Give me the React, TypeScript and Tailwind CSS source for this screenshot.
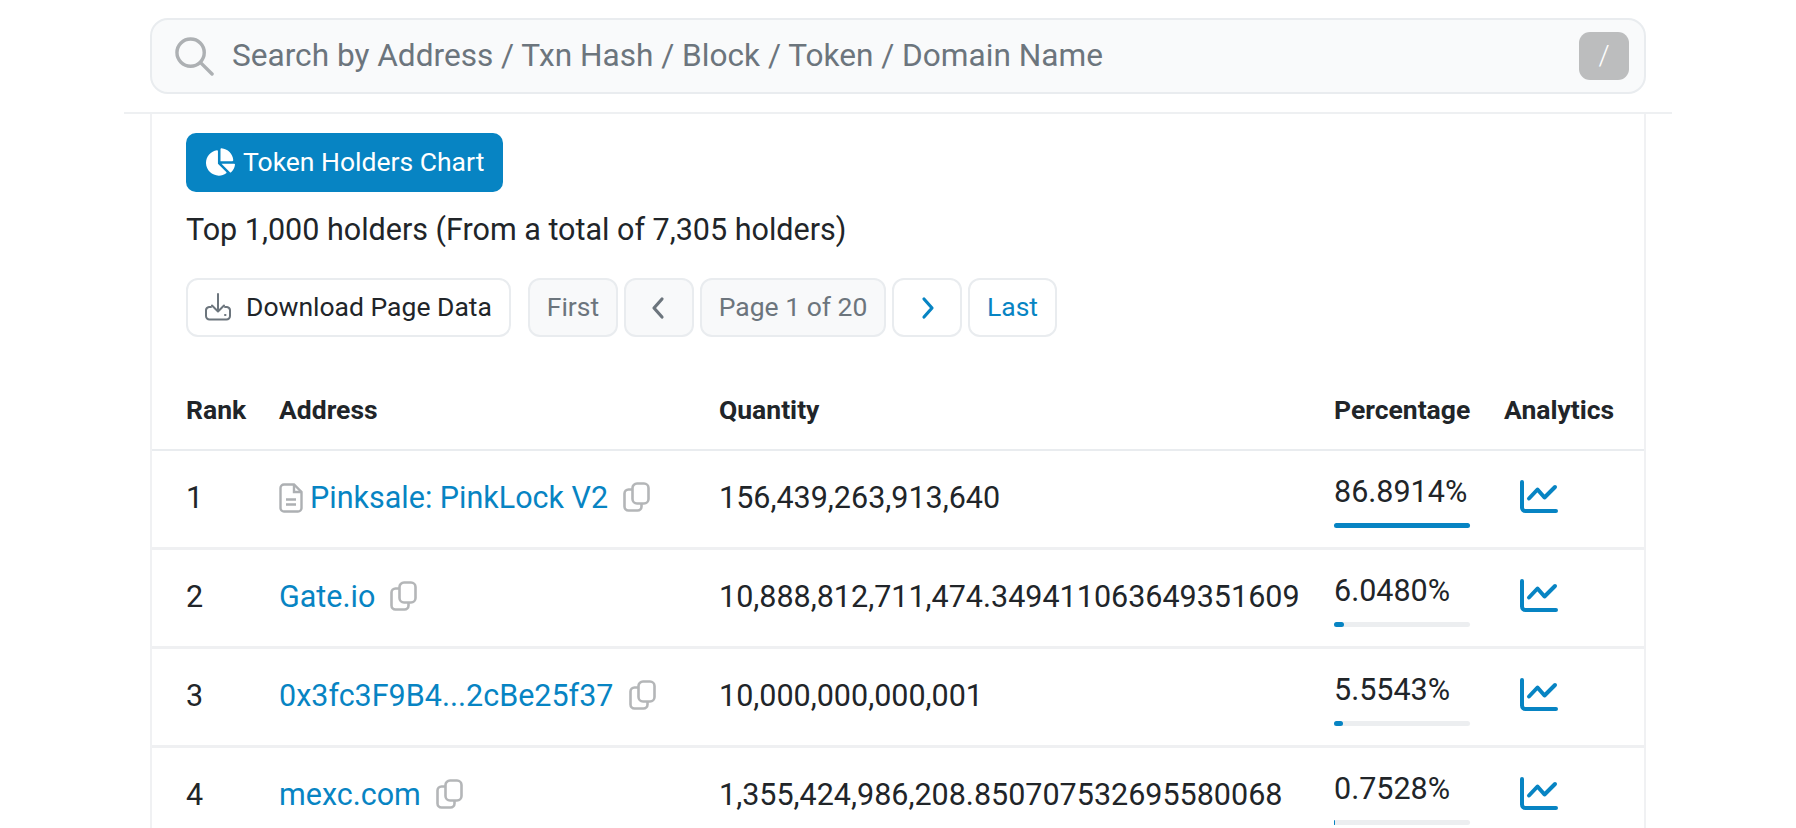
import { FaChartPie } from 'react-icons/fa'

const holders = [
  { rank: 1, name: 'Pinksale: PinkLock V2', contract: true, quantity: '156,439,263,913,640', pct: '86.8914%', bar: '100%' },
  { rank: 2, name: 'Gate.io', contract: false, quantity: '10,888,812,711,474.349411063649351609', pct: '6.0480%', bar: '7%' },
  { rank: 3, name: '0x3fc3F9B4...2cBe25f37', contract: false, quantity: '10,000,000,000,001', pct: '5.5543%', bar: '6.4%' },
  { rank: 4, name: 'mexc.com', contract: false, quantity: '1,355,424,986,208.850707532695580068', pct: '0.7528%', bar: '1%' },
]

function CopyIcon() {
  return (
    <svg viewBox="0 0 27 30" className="w-[27px] h-[30px] shrink-0 -mt-[3px]" fill="none" stroke="#b4b6b8" strokeWidth="2.6">
      <rect x="9.500" y="1.500" width="16" height="20" rx="4.500" />
      <path d="M9 7.500H5.500a4 4 0 0 0-4 4v13a4 4 0 0 0 4 4h9a4 4 0 0 0 4-4V22" />
    </svg>
  )
}

function FileIcon() {
  return (
    <svg viewBox="0 0 24 30" className="w-[24px] h-[30px] shrink-0" fill="none" stroke="#adb0b3" strokeWidth="2.4">
      <path d="M5 1.500h10l7.500 7.500v16a3.500 3.500 0 0 1-3.500 3.500H5A3.500 3.500 0 0 1 1.500 25V5A3.500 3.500 0 0 1 5 1.500Z" />
      <path d="M15 1.500V9h7.500M7 16.500h10M7 21.500h10" />
    </svg>
  )
}

function LineChartIcon() {
  return (
    <svg viewBox="0 0 38 33" className="w-[38px] h-[33px] -mt-[4px]" fill="none" stroke="#0784c3" strokeWidth="4" strokeLinecap="round" strokeLinejoin="round">
      <path d="M2 2v25.500a3.500 3.500 0 0 0 3.500 3.500H36" />
      <path d="M9 18.500l8.500-9 7 8L35 7" />
    </svg>
  )
}

function Chevron({ d, className }: { d: string; className: string }) {
  return (
    <svg viewBox="0 0 14 24" className={`w-[14px] h-[24px] ${className}`} fill="none" stroke="currentColor" strokeWidth="3.200" strokeLinecap="round" strokeLinejoin="round">
      <path d={d} />
    </svg>
  )
}

export default function App() {
  return (
    <div className="h-screen overflow-hidden bg-white text-[#212529] font-['Roboto',sans-serif] text-[30.5px]">
      <div className="px-[150px] pt-[18px] pb-[18px]">
        <div className="h-[76px] flex items-center pl-[23px] pr-[15px] bg-[#f9fafb] border-2 border-[#e9ecef] rounded-[18px]">
          <svg viewBox="0 0 40 40" className="w-[39px] h-[39px] shrink-0" fill="none" stroke="#adb0b3" strokeWidth="3.500">
            <circle cx="16" cy="16" r="14" />
            <path d="M26.500 26.500L38 38" strokeLinecap="round" />
          </svg>
          <span className="ml-[18px] text-[#6c757d] flex-1 text-[31.600px]">Search by Address / Txn Hash / Block / Token / Domain Name</span>
          <span className="w-[50px] h-[48px] bg-[#bcbdbe] rounded-[11px] flex items-center justify-center text-white text-[28px] font-light">/</span>
        </div>
      </div>
      <div className="mx-[124px] border-t-2 border-[#eef0f2]">
        <div className="mx-[26px] border-x-2 border-[#f0f1f3]">
          <div className="px-[34px] pt-[19px]">
            <div className="w-[317px] h-[59px] pb-[2px] bg-[#0784c3] rounded-[10px] flex items-center gap-[8px] pl-[20px] text-white text-[26.500px] whitespace-nowrap">
              <FaChartPie className="w-[29px] h-[28px]" />
              <span>Token Holders Chart</span>
            </div>
            <p className="mt-[19px] leading-[38px]">Top 1,000 holders (From a total of 7,305 holders)</p>
            <div className="mt-[29px] flex items-center text-[26.500px]">
              <div className="w-[325px] h-[59px] pb-[2px] flex items-center gap-[14px] pl-[16px] border-2 border-[#e9ecef] rounded-[12px] whitespace-nowrap">
                <svg viewBox="0 0 28 30" className="w-[28px] h-[30px]" fill="none" stroke="#6c757d" strokeWidth="2" strokeLinecap="round" strokeLinejoin="round">
                  <path d="M14 2v17M8 13.500l6 6 6-6" />
                  <path d="M7 15H5a3.500 3.500 0 0 0-3 3v6a3.500 3.500 0 0 0 3.500 3.500h17A3.500 3.500 0 0 0 26 24v-6a3.500 3.500 0 0 0-3-3h-2" />
                  <path d="M21 23h.5" />
                </svg>
                <span>Download Page Data</span>
              </div>
              <div className="ml-[17px] w-[90px] h-[59px] pb-[2px] flex items-center justify-center bg-[#f8f9fa] border-2 border-[#e9ecef] rounded-[12px] text-[#6c757d]">First</div>
              <div className="ml-[6px] w-[70px] h-[59px] flex items-center justify-center bg-[#f8f9fa] border-2 border-[#e9ecef] rounded-[12px] text-[#6c757d]">
                <Chevron d="M11 3L3 12l8 9" className="-ml-[2px]" />
              </div>
              <div className="ml-[6px] w-[186px] h-[59px] pb-[2px] flex items-center justify-center bg-[#f8f9fa] border-2 border-[#e9ecef] rounded-[12px] text-[#6c757d]">Page 1 of 20</div>
              <div className="ml-[6px] w-[70px] h-[59px] flex items-center justify-center border-2 border-[#e9ecef] rounded-[12px] text-[#0784c3]">
                <Chevron d="M3 3l8 9-8 9" className="ml-[1px]" />
              </div>
              <div className="ml-[6px] w-[89px] h-[59px] pb-[2px] flex items-center justify-center border-2 border-[#e9ecef] rounded-[12px] text-[#0784c3]">Last</div>
            </div>
          </div>
          <div className="mt-[51px] h-[63px] pb-[18px] px-[34px] grid grid-cols-[93px_440px_615px_170px_1fr] items-center text-[26.500px] font-bold border-b-2 border-[#e9ecef]">
            <span>Rank</span>
            <span>Address</span>
            <span>Quantity</span>
            <span>Percentage</span>
            <span>Analytics</span>
          </div>
          {holders.map((h) => (
            <div key={h.rank} className="h-[99px] pb-[2px] px-[34px] grid grid-cols-[93px_440px_615px_170px_1fr] items-center border-b-[3px] border-[#eff0f2]">
              <span>{h.rank}</span>
              <div className="flex items-center">
                {h.contract && <span className="mr-[7px]"><FileIcon /></span>}
                <span className="text-[#0784c3] mr-[15px]">{h.name}</span>
                <CopyIcon />
              </div>
              <span className="whitespace-nowrap">{h.quantity}</span>
              <div className="w-[136px] pt-[7px]">
                <div className="leading-[32px]">{h.pct}</div>
                <div className="mt-[15px] h-[5px] rounded-full bg-[#eceef0]">
                  <div className="h-[5px] rounded-full bg-[#0784c3]" style={{ width: h.bar }} />
                </div>
              </div>
              <div className="pl-[16px]"><LineChartIcon /></div>
            </div>
          ))}
        </div>
      </div>
    </div>
  )
}
